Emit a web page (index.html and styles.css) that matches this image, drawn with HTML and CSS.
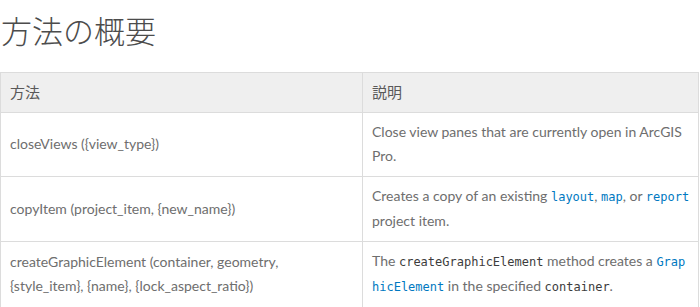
FILE: index.html
```html
<!DOCTYPE html>
<html lang="ja">
<head>
<meta charset="utf-8">
<link rel="stylesheet" href="styles.css">
</head>
<body>
<h2 class="title">方法の概要</h2>
<table class="methods">
  <thead>
    <tr><th class="col-method">方法</th><th class="col-desc">説明</th></tr>
  </thead>
  <tbody>
    <tr>
      <td>closeViews ({view_type})</td>
      <td>Close view panes that are currently open in ArcGIS Pro.</td>
    </tr>
    <tr>
      <td>copyItem (project_item, {new_name})</td>
      <td>Creates a copy of an existing <a class="code link">layout</a>, <a class="code link">map</a>, or <a class="code link">report</a> project item.</td>
    </tr>
    <tr>
      <td>createGraphicElement (container, geometry, {style_item}, {name}, {lock_aspect_ratio})</td>
      <td>The <code class="code strong">createGraphicElement</code> method creates a <a class="code link brk">GraphicElement</a> in the specified <code class="code strong">container</code>.</td>
    </tr>
  </tbody>
</table>
</body>
</html>
```
FILE: styles.css
```css
html, body {
  margin: 0;
  padding: 0;
  background: #fff;
}
body {
  font-family: "Lato", "Noto Sans CJK JP", sans-serif;
  color: #6e6e6e;
  font-size: 14px;
}
.title {
  margin: 0;
  padding: 7px 0 0 1px;
  height: 72px;
  box-sizing: border-box;
  font-family: "Noto Sans CJK JP", sans-serif;
  font-weight: 300;
  font-size: 31px;
  line-height: 46px;
  color: #4c4c4c;
}
.methods {
  width: 699px;
  border-collapse: collapse;
  table-layout: fixed;
}
.col-method { width: 344px; }
.methods th, .methods td {
  border: 1px solid #dcdcdc;
  padding: 7px 8px 8px 9px;
  line-height: 24px;
  text-align: left;
  vertical-align: middle;
}
.methods th {
  background: #efefef;
  font-weight: 400;
  font-family: "Noto Sans CJK JP", sans-serif;
  font-size: 15px;
  color: #595959;
}
.methods td {
  height: 48px;
}
.code {
  font-family: "DejaVu Sans Mono", monospace;
  font-size: 12px;
}
.link { color: #0079c1; text-decoration: none; }
.strong { color: #3c3c3c; }
.brk { word-break: break-all; }
```
